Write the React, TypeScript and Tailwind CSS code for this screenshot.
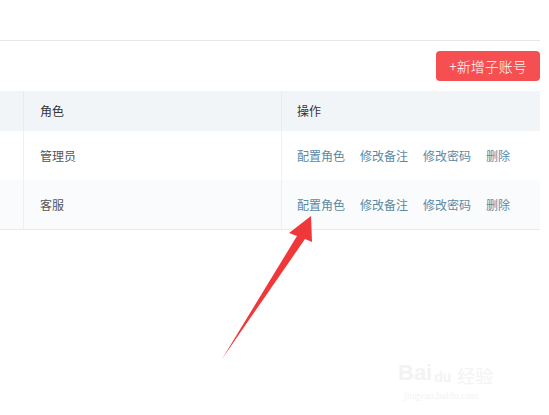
import React from 'react';

const rows = [
  { role: '管理员', bg: 'bg-white' },
  { role: '客服', bg: 'bg-[#fafbfc]' },
];

const actions = ['配置角色', '修改备注', '修改密码', '删除'];

const App: React.FC = () => {
  return (
    <div
      className="relative w-[549px] h-[415px] bg-white overflow-hidden text-[12px] text-[#333]"
      style={{ fontFamily: '"Noto Sans CJK SC", "Liberation Sans", sans-serif' }}
    >
      <div className="pr-[9px]">
        <div className="h-[40px]" />
        <div className="h-px bg-[#e6e6e6]" />

        {/* toolbar */}
        <div className="flex justify-end pt-[10px] pb-[10px]">
          <button className="w-[104px] h-[30px] rounded-[4px] bg-[#f64f52] text-white text-[14px] font-light leading-[30px] text-center">
            +新增子账号
          </button>
        </div>

        {/* table */}
        <div className="border-b border-[#e8ebee]">
          <div className="flex h-[40px] bg-[#f2f5f8] items-center">
            <div className="w-[24px] h-full border-r border-[#e8ecf0]" />
            <div className="w-[258px] h-full border-r border-[#e8ecf0] flex items-center pl-[16px]">角色</div>
            <div className="flex-1 h-full flex items-center pl-[15px]">操作</div>
          </div>
          {rows.map((r) => (
            <div key={r.role} className={`flex h-[49px] ${r.bg}`}>
              <div className="w-[24px] h-full border-r border-[#eef0f2]" />
              <div className="w-[258px] h-full border-r border-[#eef0f2] flex items-center pl-[16px] text-[#555]">
                {r.role}
              </div>
              <div className="flex-1 h-full flex items-center pl-[15px] gap-[15px] text-[#5a89a5]">
                {actions.map((a) => (
                  <span key={a}>{a}</span>
                ))}
              </div>
            </div>
          ))}
        </div>
      </div>

      {/* red arrow annotation */}
      <svg className="absolute left-0 top-0" width="549" height="415" viewBox="0 0 549 415">
        <polygon
          points="222,359 297,236 289,233 311,216 312,242 305,239"
          fill="#f0383a"
        />
      </svg>

      {/* faint watermark */}
      <div className="absolute left-[398px] top-[362px] flex flex-col items-start text-[#f3f3f3] select-none">
        <div className="flex items-end gap-[2px] leading-none">
          <span className="text-[22px] font-bold" style={{ fontFamily: '"Liberation Sans", sans-serif' }}>Bai</span>
          <span className="text-[14px] font-bold" style={{ fontFamily: '"Liberation Sans", sans-serif' }}>du</span>
          <span className="text-[18px] ml-[4px]">经验</span>
        </div>
        <span className="text-[10px] mt-[4px] ml-[6px]" style={{ fontFamily: '"Liberation Serif", serif' }}>
          jingyan.baidu.com
        </span>
      </div>
    </div>
  );
};

export default App;
